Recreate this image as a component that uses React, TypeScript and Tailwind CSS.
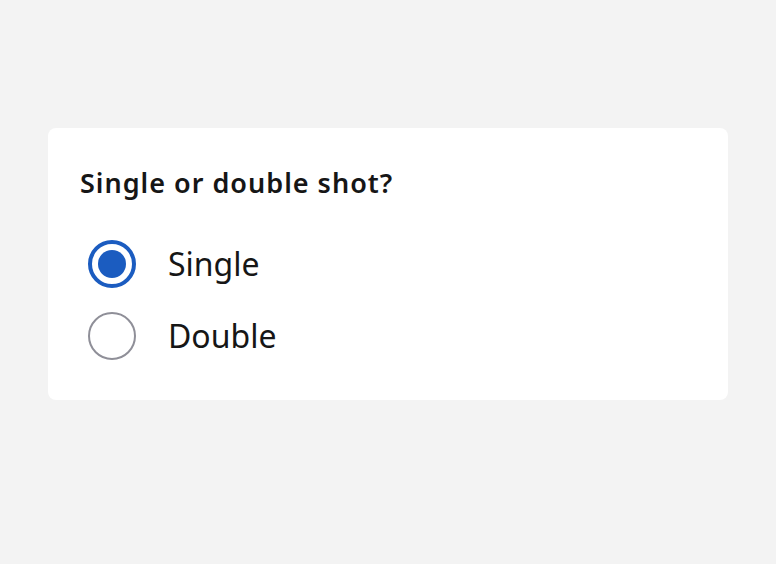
import React, { useState } from 'react';

const options = ['Single', 'Double'];

export default function App() {
  const [selected, setSelected] = useState('Single');

  return (
    <div
      className="min-h-[564px] w-full bg-[#f3f3f3] pt-32 px-12"
      style={{ fontFamily: '"Noto Sans", "Open Sans", sans-serif' }}
    >
      <div className="rounded-lg bg-white px-8 pt-10 pb-10">
        <h2 className="text-[27px] leading-[30px] font-semibold tracking-[1px] text-[#161616]">
          Single or double shot?
        </h2>

        <div className="mt-[42px] flex flex-col gap-6 pl-2">
          {options.map((opt) => {
            const checked = selected === opt;
            return (
              <label key={opt} className="flex items-center gap-8 cursor-pointer">
                <input
                  type="radio"
                  name="shot"
                  value={opt}
                  checked={checked}
                  onChange={() => setSelected(opt)}
                  className="sr-only"
                />
                <span
                  className={
                    checked
                      ? 'flex h-12 w-12 shrink-0 items-center justify-center rounded-full border-4 border-[#1b5cc0]'
                      : 'flex h-12 w-12 shrink-0 items-center justify-center rounded-full border-2 border-[#8f8f98]'
                  }
                >
                  {checked && <span className="h-7 w-7 rounded-full bg-[#1b5cc0]" />}
                </span>
                <span className="text-[32px] leading-none text-[#161616]">{opt}</span>
              </label>
            );
          })}
        </div>
      </div>
    </div>
  );
}
